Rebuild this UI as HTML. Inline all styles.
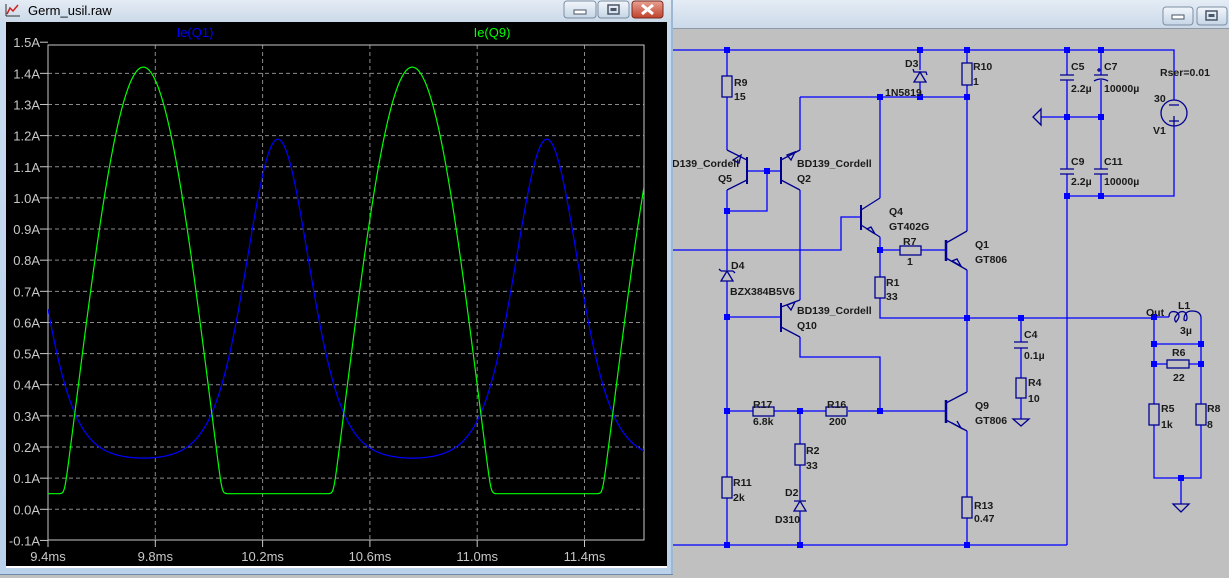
<!DOCTYPE html>
<html><head><meta charset="utf-8">
<style>
html,body{margin:0;padding:0;width:1229px;height:578px;overflow:hidden;background:#c0c0c0;font-family:"Liberation Sans",Arial,sans-serif}
svg{position:absolute;left:0;top:0}
.lb{font:bold 10.5px "Liberation Sans",Arial,sans-serif;fill:#1a1a1a}
.ax{font:13px "Liberation Sans",Arial,sans-serif;fill:#c8c8c8}
</style></head><body>
<svg width="1229" height="578" viewBox="0 0 1229 578" xmlns="http://www.w3.org/2000/svg">
<defs>
<linearGradient id="tb" x1="0" y1="0" x2="0" y2="1"><stop offset="0" stop-color="#e4ecf5"/><stop offset="1" stop-color="#cbd9e8"/></linearGradient>
<linearGradient id="tb2" x1="0" y1="0" x2="0" y2="1"><stop offset="0" stop-color="#c9dcf1"/><stop offset="1" stop-color="#b9d1ea"/></linearGradient>
<linearGradient id="bt" x1="0" y1="0" x2="0" y2="1"><stop offset="0" stop-color="#f2f6fb"/><stop offset="1" stop-color="#c5d5e6"/></linearGradient>
<linearGradient id="cl" x1="0" y1="0" x2="0" y2="1"><stop offset="0" stop-color="#e8a393"/><stop offset="1" stop-color="#c0412b"/></linearGradient>
</defs>
<rect x="672" y="0" width="557" height="28" fill="url(#tb)"/>
<line x1="672" y1="28.5" x2="1229" y2="28.5" stroke="#8e9aa8"/>
<rect x="1163" y="7" width="30" height="18" rx="3" fill="url(#bt)" stroke="#7d8ea3"/>
<rect x="1172" y="15" width="12" height="4" fill="#fff" stroke="#4a5566"/>
<rect x="1197" y="7" width="30" height="18" rx="3" fill="url(#bt)" stroke="#7d8ea3"/>
<rect x="1206" y="11" width="11" height="9" fill="none" stroke="#4a5566" stroke-width="1.5"/>
<rect x="1208.5" y="14" width="6" height="3" fill="#4a5566"/>

<g stroke="#0000ff" stroke-width="1.3" fill="none">
<path d="M672 50H1174V100M1174 126V196H1067M1067 50V75M1067 80V169M1067 174V545M1101 50V75M1101 80V169M1101 174V196M1041 117H1101"/>
<path d="M727 50V76M727 97V150M727 190V211H767V171M747 171H781"/>
<path d="M727 211V270M727 281V317H781M727 317V477M727 498V545"/>
<path d="M800 97H967M800 97V150M800 190V300M800 337V357H880V411"/>
<path d="M920 50V70M920 82V97M967 50V63M967 85V231M967 270V392M967 431V497M967 518V545"/>
<path d="M880 97V198M880 237V277M880 298V318H1154M861 217H841V250H672M880 250H900M921 250H946"/>
<path d="M727 411H753M774 411H826M848 411H946M800 411V444M800 465V500M800 511V545"/>
<path d="M672 545H1067"/>
<path d="M1021 318V342M1021 348V378M1021 398V419"/>
<path d="M1154 317V404M1154 425V478H1201V425M1201 404V317M1154 344H1201M1154 364H1167M1189 364H1201"/>
<path d="M1181 478V504M1155 317H1169"/>
</g>
<g fill="#0000ff">
<rect x="724" y="47" width="6" height="6"/><rect x="917" y="47" width="6" height="6"/><rect x="964" y="47" width="6" height="6"/><rect x="1064" y="47" width="6" height="6"/><rect x="1098" y="47" width="6" height="6"/>
<rect x="877" y="94" width="6" height="6"/><rect x="917" y="94" width="6" height="6"/><rect x="964" y="94" width="6" height="6"/>
<rect x="764" y="168" width="6" height="6"/><rect x="724" y="208" width="6" height="6"/>
<rect x="1064" y="114" width="6" height="6"/><rect x="1098" y="114" width="6" height="6"/><rect x="1064" y="193" width="6" height="6"/><rect x="1098" y="193" width="6" height="6"/>
<rect x="877" y="247" width="6" height="6"/>
<rect x="724" y="314" width="6" height="6"/><rect x="964" y="315" width="6" height="6"/><rect x="1018" y="315" width="6" height="6"/><rect x="1151" y="314" width="6" height="6"/>
<rect x="1151" y="341" width="6" height="6"/><rect x="1198" y="341" width="6" height="6"/><rect x="1151" y="361" width="6" height="6"/><rect x="1198" y="361" width="6" height="6"/>
<rect x="724" y="408" width="6" height="6"/><rect x="797" y="408" width="6" height="6"/><rect x="877" y="408" width="6" height="6"/>
<rect x="1178" y="475" width="6" height="6"/>
<rect x="724" y="542" width="6" height="6"/><rect x="797" y="542" width="6" height="6"/><rect x="964" y="542" width="6" height="6"/>
</g>
<g stroke="#000090" stroke-width="1.3" fill="none">
<rect x="722" y="76" width="10" height="21"/><rect x="962" y="63" width="10" height="22"/>
<rect x="875" y="277" width="10" height="21"/><rect x="722" y="477" width="10" height="21"/>
<rect x="795" y="444" width="10" height="21"/><rect x="962" y="497" width="10" height="21"/>
<rect x="1016" y="378" width="10" height="20"/><rect x="1149" y="404" width="10" height="21"/><rect x="1196" y="404" width="10" height="21"/>
<rect x="900" y="246" width="21" height="9"/><rect x="753" y="407" width="21" height="9"/><rect x="826" y="407" width="21" height="9"/><rect x="1167" y="360" width="22" height="8"/>
<path d="M1060 75H1074M1060 80H1074M1060 169H1074M1060 174H1074M1094 169H1108M1094 174H1108M1094 75H1108M1094 81Q1101 77 1108 81M1014 342H1028M1014 348H1028M1097 70H1101M1099 68V72"/>
<path d="M1041 109V125L1033 117Z" />
<path d="M1013 419H1029L1021 426Z"/><path d="M1173 504H1189L1181 512Z"/>
<circle cx="1174" cy="113" r="13"/><path d="M1169 105H1179M1169 121H1179M1174 116V126"/>
<path d="M1169 317Q1169 310 1176 312Q1182 315 1176 322Q1172 318 1180 312Q1186 310 1187 317Q1187 322 1184 320Q1184 311 1192 311Q1200 311 1201 317"/>
<path d="M914 82H926L920 72ZM913 69L914 72H926L927 75"/>
<path d="M721 281H733L727 271ZM721 271H733M719 269L721 271M733 271L735 273"/>
<path d="M794 511H806L800 501ZM794 501H806"/>
<path d="M747 157V184M781 157V184M861 205V230M781 303V332" stroke-width="2"/>
<path d="M747 160L727 150M747 180L727 190M781 160L800 150M781 180L800 190M861 210L880 198M861 225L880 237M781 307L800 300M781 327L800 337"/>
<path d="M946 240V261M946 400V423" stroke-width="2.5"/>
<path d="M946 243L967 231M946 258L967 270M946 403L967 392M946 420L967 431"/>
<path d="M741 155L733 160L739 163ZM787 155L795 152L791 160ZM867 229L875 234L871 227ZM787 305L795 302L791 310ZM952 261L961 266L957 259ZM952 423L961 428L957 421"/>
</g>
<g class="lb">
<text x="734" y="86">R9</text><text x="734" y="100">15</text>
<text x="672" y="167">D139_Cordell</text><text x="718" y="182">Q5</text>
<text x="797" y="167">BD139_Cordell</text><text x="797" y="182">Q2</text>
<text x="905" y="67">D3</text><text x="885" y="96">1N5819</text>
<text x="973" y="70">R10</text><text x="973" y="85">1</text>
<text x="889" y="215">Q4</text><text x="889" y="230">GT402G</text>
<text x="903" y="245">R7</text><text x="907" y="265">1</text>
<text x="975" y="248">Q1</text><text x="975" y="263">GT806</text>
<text x="886" y="286">R1</text><text x="886" y="300">33</text>
<text x="731" y="269">D4</text><text x="730" y="295">BZX384B5V6</text>
<text x="797" y="314">BD139_Cordell</text><text x="797" y="329">Q10</text>
<text x="753" y="408">R17</text><text x="753" y="425">6.8k</text>
<text x="827" y="408">R16</text><text x="829" y="425">200</text>
<text x="975" y="409">Q9</text><text x="975" y="424">GT806</text>
<text x="806" y="454">R2</text><text x="806" y="469">33</text>
<text x="733" y="486">R11</text><text x="733" y="501">2k</text>
<text x="785" y="496">D2</text><text x="775" y="523">D310</text>
<text x="974" y="509">R13</text><text x="974" y="522">0.47</text>
<text x="1071" y="70">C5</text><text x="1071" y="92">2.2µ</text>
<text x="1104" y="70">C7</text><text x="1104" y="92">10000µ</text>
<text x="1071" y="165">C9</text><text x="1071" y="185">2.2µ</text>
<text x="1104" y="165">C11</text><text x="1104" y="185">10000µ</text>
<text x="1160" y="76">Rser=0.01</text><text x="1154" y="102">30</text><text x="1153" y="134">V1</text>
<text x="1024" y="338">C4</text><text x="1024" y="359">0.1µ</text>
<text x="1028" y="386">R4</text><text x="1028" y="402">10</text>
<text x="1146" y="316">Out</text><text x="1178" y="309">L1</text><text x="1180" y="334">3µ</text>
<text x="1172" y="356">R6</text><text x="1173" y="381">22</text>
<text x="1161" y="412">R5</text><text x="1161" y="428">1k</text>
<text x="1207" y="412">R8</text><text x="1207" y="428">8</text>
</g>

<rect x="0" y="0" width="673" height="578" fill="url(#tb2)"/>
<rect x="0" y="0" width="673" height="22" fill="url(#tb)"/>
<rect x="671" y="0" width="2" height="578" fill="#9fb8d2"/>
<rect x="0" y="574" width="673" height="1" fill="#6f8aa8"/>
<rect x="0" y="575" width="673" height="3" fill="#c0c0c0"/>
<path d="M6 16V4M6 16H20" stroke="#333" fill="none"/><path d="M7 14L10 8L13 11L18 5" stroke="#d02020" stroke-width="1.5" fill="none"/>
<text x="28" y="15" style="font:13px 'Liberation Sans',Arial,sans-serif;fill:#000">Germ_usil.raw</text>
<rect x="564" y="1" width="32" height="17" rx="3" fill="url(#bt)" stroke="#7d8ea3"/>
<rect x="574" y="10" width="12" height="4" fill="#fff" stroke="#4a5566"/>
<rect x="598" y="1" width="31" height="17" rx="3" fill="url(#bt)" stroke="#7d8ea3"/>
<rect x="608" y="5" width="11" height="9" fill="none" stroke="#4a5566" stroke-width="1.5"/>
<rect x="610.5" y="8" width="6" height="3" fill="#4a5566"/>
<rect x="632" y="1" width="31" height="17" rx="3" fill="url(#cl)" stroke="#7a2a20"/>
<path d="M642 5L653 14M653 5L642 14" stroke="#fff" stroke-width="3"/>
<rect x="6" y="22" width="661" height="544" fill="#000"/>
<rect x="6" y="566" width="661" height="2" fill="#fff"/>
<g id="grid" stroke="#8a8a8a" stroke-dasharray="4,3" stroke-width="1"></g>
<g id="axes"></g>
<rect x="48" y="45" width="596" height="495" fill="none" stroke="#c8c8c8"/>
<text x="195" y="37" text-anchor="middle" style="font:13px 'Liberation Sans',Arial,sans-serif;fill:#0000ff">Ie(Q1)</text>
<text x="492" y="37" text-anchor="middle" style="font:13px 'Liberation Sans',Arial,sans-serif;fill:#00ff00">Ie(Q9)</text>
<clipPath id="cp"><rect x="48" y="45" width="596" height="495"/></clipPath>
<g clip-path="url(#cp)"><path id="pb" fill="none" stroke="#0000ff" stroke-width="1.2"/><path id="pg" fill="none" stroke="#00ff00" stroke-width="1.2"/></g>
</svg>
<script>
(function(){
var NS="http://www.w3.org/2000/svg",grid=document.getElementById("grid"),axes=document.getElementById("axes");
function el(p,t,a,txt){var e=document.createElementNS(NS,t);for(var k in a)e.setAttribute(k,a[k]);if(txt)e.textContent=txt;p.appendChild(e);return e;}
var y0=509.3,sc=311.4;
for(var i=-1;i<=15;i++){var y=y0-i*sc/10;
 if(i>-1&&i<15)el(grid,"line",{x1:48,x2:644,y1:y,y2:y});
 el(axes,"line",{x1:40,x2:48,y1:y,y2:y,stroke:"#c8c8c8"});
 el(axes,"text",{x:40,y:y+5,"text-anchor":"end","class":"ax"},(i/10).toFixed(1)+"A");}
var lab=["9.4ms","9.8ms","10.2ms","10.6ms","11.0ms","11.4ms"];
for(var j=0;j<6;j++){var x=48+j*107.3;
 if(j>0)el(grid,"line",{x1:x,x2:x,y1:45,y2:540});
 el(axes,"line",{x1:x,x2:x,y1:540,y2:547,stroke:"#c8c8c8"});
 el(axes,"text",{x:x,y:561,"text-anchor":"middle","class":"ax"},lab[j]);}
var b="",g="",s=0.025;
for(var x=48;x<=644;x+=0.5){var th=2*Math.PI*(x-143.3)/269,v=Math.cos(th);
 var lin=0.34+1.08*v,gv=0.05+s*Math.log(1+Math.exp((lin-0.05)/s));
 var bv=0.14+0.16*Math.exp(-1.88*v);
 g+=(x==48?"M":"L")+x+" "+(y0-gv*sc).toFixed(1);
 b+=(x==48?"M":"L")+x+" "+(y0-bv*sc).toFixed(1);}
document.getElementById("pb").setAttribute("d",b);
document.getElementById("pg").setAttribute("d",g);
})();
</script>
</body></html>
